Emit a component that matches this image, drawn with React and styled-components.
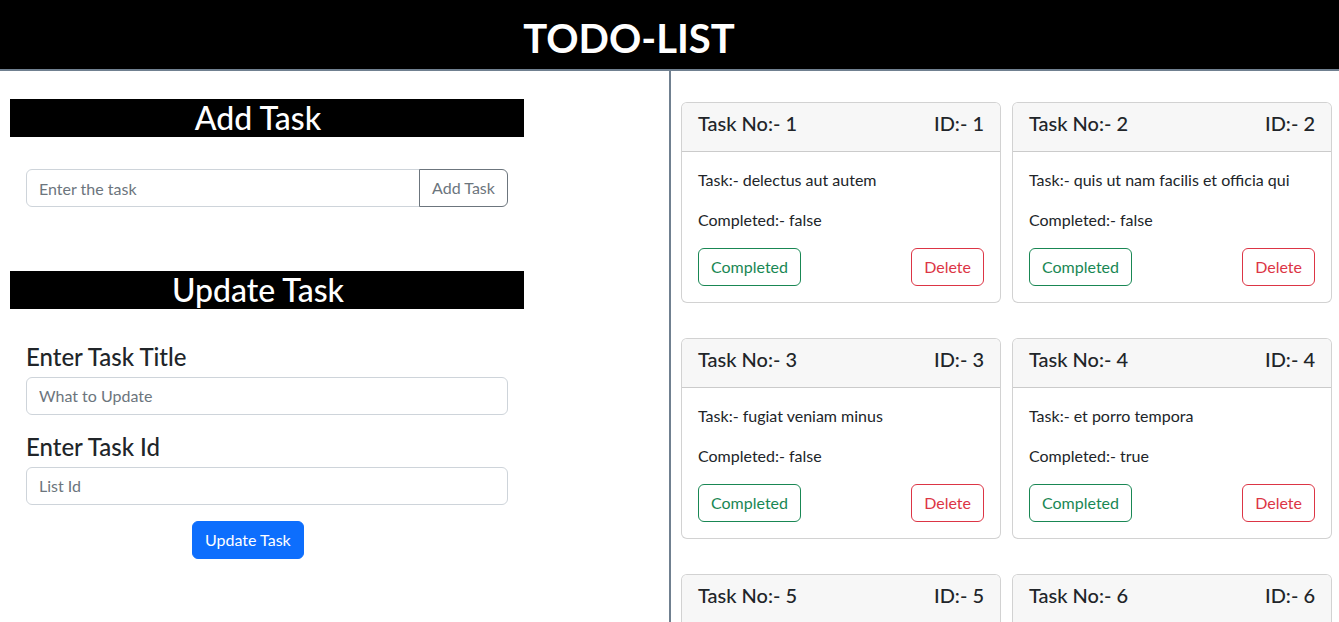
import React from 'react';
import styled, { createGlobalStyle } from 'styled-components';

const GlobalStyle = createGlobalStyle`
  * { box-sizing: border-box; }
  body {
    margin: 0;
    font-family: Lato, "Noto Sans", sans-serif;
    color: #212529;
    background: #fff;
  }
  input::placeholder { color: #6c757d; opacity: 1; }
`;

const Header = styled.header`
  height: 71px;
  background: #000;
  border-bottom: 2px solid #708090;
  display: flex;
  align-items: center;
  justify-content: center;
  padding: 7px 81px 0 0;
`;

const Title = styled.h1`
  margin: 0;
  color: #fff;
  font-size: 40px;
  font-weight: 700;
  line-height: 48px;
`;

const Main = styled.main`
  display: grid;
  grid-template-columns: 669px 1fr;
  min-height: 551px;
`;

const LeftPane = styled.section`
  padding-top: 28px;
`;

const Banner = styled.h2`
  margin: ${(p) => (p.$first ? '0' : '64px')} 0 0 10px;
  width: 514px;
  height: 38px;
  background: #000;
  color: #fff;
  font-size: 32px;
  font-weight: 500;
  line-height: 38px;
  text-align: center;
  padding-right: 18px;
`;

const InputGroup = styled.div`
  display: flex;
  margin: 32px 0 0 26px;
  width: 482px;
  height: 38px;
`;

const TextInput = styled.input`
  flex: 1;
  min-width: 0;
  height: 38px;
  border: 1px solid #ced4da;
  border-radius: ${(p) => (p.$grouped ? '6px 0 0 6px' : '6px')};
  padding: 6px 12px;
  font: inherit;
  font-size: 16px;
  line-height: 24px;
  color: #212529;
  outline: none;
`;

const GroupButton = styled.button`
  height: 38px;
  margin-left: -1px;
  border: 1px solid #6c757d;
  border-radius: 0 6px 6px 0;
  background: transparent;
  color: #6c757d;
  padding: 6px 12px;
  font: inherit;
  font-size: 16px;
  line-height: 24px;
  width: 89px;
`;

const UpdateForm = styled.div`
  display: flex;
  flex-direction: column;
  align-items: flex-start;
  padding-left: 26px;
  width: 508px;
`;

const FieldLabel = styled.h4`
  margin: ${(p) => (p.$first ? '34px' : '18px')} 0 5px;
  font-size: 24px;
  font-weight: 500;
  line-height: 1.2;
  color: #212529;
`;

const FieldInput = styled(TextInput)`
  flex: none;
  width: 482px;
`;

const PrimaryButton = styled.button`
  margin: 16px 0 0 166px;
  height: 38px;
  padding: 6px 12px;
  border: 1px solid #0d6efd;
  border-radius: 6px;
  background: #0d6efd;
  color: #fff;
  font: inherit;
  font-size: 16px;
  line-height: 24px;
`;

const RightPane = styled.section`
  border-left: 2px solid #708090;
  padding: 31px 0 0 10px;
  display: grid;
  grid-template-columns: 320px 320px;
  column-gap: 11px;
  row-gap: 35px;
  align-content: start;
`;

const Card = styled.div`
  border: 1px solid rgba(0, 0, 0, 0.175);
  border-radius: 6px;
  overflow: hidden;
  background: #fff;
`;

const CardHeader = styled.div`
  display: flex;
  justify-content: space-between;
  padding: 8px 16px;
  background: #f7f7f7;
  border-bottom: 1px solid rgba(0, 0, 0, 0.175);
`;

const HeaderText = styled.h5`
  margin: 0 0 8px;
  font-size: 20px;
  font-weight: 500;
  line-height: 1.2;
`;

const CardBody = styled.div`
  padding: 16px;
`;

const Line = styled.p`
  margin: 0 0 16px;
  font-size: 16px;
  line-height: 24px;
`;

const Actions = styled.div`
  display: flex;
  justify-content: space-between;
`;

const OutlineButton = styled.button`
  height: 38px;
  padding: 6px 12px;
  border: 1px solid ${(p) => p.$color};
  border-radius: 6px;
  background: transparent;
  color: ${(p) => p.$color};
  font: inherit;
  font-size: 16px;
  line-height: 24px;
`;

const tasks = [
  { id: 1, title: 'delectus aut autem', completed: false },
  { id: 2, title: 'quis ut nam facilis et officia qui', completed: false },
  { id: 3, title: 'fugiat veniam minus', completed: false },
  { id: 4, title: 'et porro tempora', completed: true },
  { id: 5, title: 'laboriosam mollitia et enim quasi adipisci quia provident illum', completed: false },
  { id: 6, title: 'qui ullam ratione quibusdam voluptatem quia omnis', completed: false },
];

export default function App() {
  return (
    <>
      <GlobalStyle />
      <Header>
        <Title>TODO-LIST</Title>
      </Header>
      <Main>
        <LeftPane>
          <Banner $first>Add Task</Banner>
          <InputGroup>
            <TextInput $grouped placeholder="Enter the task" />
            <GroupButton>Add Task</GroupButton>
          </InputGroup>
          <Banner>Update Task</Banner>
          <UpdateForm>
            <FieldLabel $first>Enter Task Title</FieldLabel>
            <FieldInput placeholder="What to Update" />
            <FieldLabel>Enter Task Id</FieldLabel>
            <FieldInput placeholder="List Id" />
            <PrimaryButton>Update Task</PrimaryButton>
          </UpdateForm>
        </LeftPane>
        <RightPane>
          {tasks.map((t) => (
            <Card key={t.id}>
              <CardHeader>
                <HeaderText>Task No:- {t.id}</HeaderText>
                <HeaderText>ID:- {t.id}</HeaderText>
              </CardHeader>
              <CardBody>
                <Line>Task:- {t.title}</Line>
                <Line>Completed:- {String(t.completed)}</Line>
                <Actions>
                  <OutlineButton $color="#198754">Completed</OutlineButton>
                  <OutlineButton $color="#dc3545">Delete</OutlineButton>
                </Actions>
              </CardBody>
            </Card>
          ))}
        </RightPane>
      </Main>
    </>
  );
}
